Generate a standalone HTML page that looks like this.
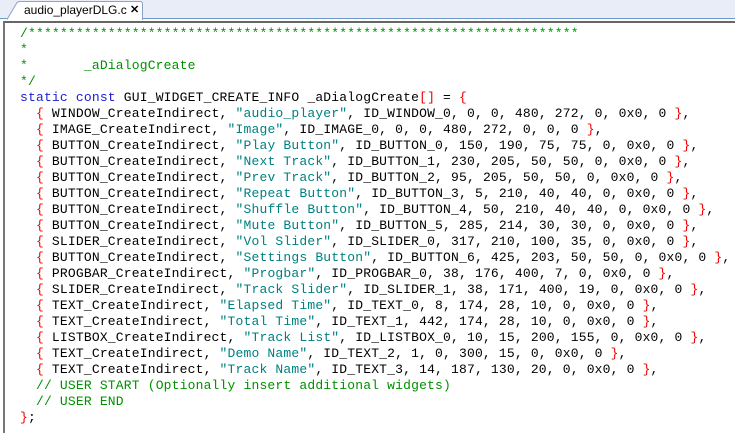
<!DOCTYPE html>
<html><head><style>
html,body{margin:0;padding:0;width:735px;height:431px;overflow:hidden;background:#fff}
.top{position:absolute;left:0;top:0;width:735px;height:18px;background:#e9edf7;border-bottom:1px solid #6d9ac8}
.tab{position:absolute;left:7px;top:1px;width:135px;height:18px;}
.tab svg{position:absolute;left:0;top:0}
.tabt{position:absolute;left:17px;top:2px;font:12px "Liberation Sans",sans-serif;color:#000}
.x{position:absolute;left:123px;top:2px;font:bold 11px "Liberation Sans",sans-serif}
.ed{position:absolute;left:3px;top:21px;width:732px;height:410px;border-top:2px solid #666;border-left:2px solid #777;background:#fff}
pre{position:absolute;left:15px;top:3px;margin:0;font:13px/16px "Liberation Mono","Courier New",monospace;letter-spacing:0.18px;color:#000}
.c{color:#009000}.k{color:#2020d0}.s{color:#008080}.r{color:#f00000}
</style></head><body>
<div class="top"></div>
<div class="tab"><svg width="136" height="19"><path d="M0 18.5 L10 1.5 Q11 0.5 13 0.5 L133 0.5 Q135.5 0.5 135.5 3 L135.5 19" fill="#fff" stroke="#8aa4c8"/></svg>
<span class="tabt">audio_playerDLG.c</span><span class="x">✕</span></div>
<div class="ed"><pre><span class="c">/*********************************************************************
*
*       _aDialogCreate
*/</span>
<span class="k">static</span> <span class="k">const</span> GUI_WIDGET_CREATE_INFO _aDialogCreate<span class="r">[]</span> = <span class="r">{</span>
  <span class="r">{</span> WINDOW_CreateIndirect, <span class="s">"audio_player"</span>, ID_WINDOW_0, 0, 0, 480, 272, 0, 0x0, 0 <span class="r">}</span>,
  <span class="r">{</span> IMAGE_CreateIndirect, <span class="s">"Image"</span>, ID_IMAGE_0, 0, 0, 480, 272, 0, 0, 0 <span class="r">}</span>,
  <span class="r">{</span> BUTTON_CreateIndirect, <span class="s">"Play Button"</span>, ID_BUTTON_0, 150, 190, 75, 75, 0, 0x0, 0 <span class="r">}</span>,
  <span class="r">{</span> BUTTON_CreateIndirect, <span class="s">"Next Track"</span>, ID_BUTTON_1, 230, 205, 50, 50, 0, 0x0, 0 <span class="r">}</span>,
  <span class="r">{</span> BUTTON_CreateIndirect, <span class="s">"Prev Track"</span>, ID_BUTTON_2, 95, 205, 50, 50, 0, 0x0, 0 <span class="r">}</span>,
  <span class="r">{</span> BUTTON_CreateIndirect, <span class="s">"Repeat Button"</span>, ID_BUTTON_3, 5, 210, 40, 40, 0, 0x0, 0 <span class="r">}</span>,
  <span class="r">{</span> BUTTON_CreateIndirect, <span class="s">"Shuffle Button"</span>, ID_BUTTON_4, 50, 210, 40, 40, 0, 0x0, 0 <span class="r">}</span>,
  <span class="r">{</span> BUTTON_CreateIndirect, <span class="s">"Mute Button"</span>, ID_BUTTON_5, 285, 214, 30, 30, 0, 0x0, 0 <span class="r">}</span>,
  <span class="r">{</span> SLIDER_CreateIndirect, <span class="s">"Vol Slider"</span>, ID_SLIDER_0, 317, 210, 100, 35, 0, 0x0, 0 <span class="r">}</span>,
  <span class="r">{</span> BUTTON_CreateIndirect, <span class="s">"Settings Button"</span>, ID_BUTTON_6, 425, 203, 50, 50, 0, 0x0, 0 <span class="r">}</span>,
  <span class="r">{</span> PROGBAR_CreateIndirect, <span class="s">"Progbar"</span>, ID_PROGBAR_0, 38, 176, 400, 7, 0, 0x0, 0 <span class="r">}</span>,
  <span class="r">{</span> SLIDER_CreateIndirect, <span class="s">"Track Slider"</span>, ID_SLIDER_1, 38, 171, 400, 19, 0, 0x0, 0 <span class="r">}</span>,
  <span class="r">{</span> TEXT_CreateIndirect, <span class="s">"Elapsed Time"</span>, ID_TEXT_0, 8, 174, 28, 10, 0, 0x0, 0 <span class="r">}</span>,
  <span class="r">{</span> TEXT_CreateIndirect, <span class="s">"Total Time"</span>, ID_TEXT_1, 442, 174, 28, 10, 0, 0x0, 0 <span class="r">}</span>,
  <span class="r">{</span> LISTBOX_CreateIndirect, <span class="s">"Track List"</span>, ID_LISTBOX_0, 10, 15, 200, 155, 0, 0x0, 0 <span class="r">}</span>,
  <span class="r">{</span> TEXT_CreateIndirect, <span class="s">"Demo Name"</span>, ID_TEXT_2, 1, 0, 300, 15, 0, 0x0, 0 <span class="r">}</span>,
  <span class="r">{</span> TEXT_CreateIndirect, <span class="s">"Track Name"</span>, ID_TEXT_3, 14, 187, 130, 20, 0, 0x0, 0 <span class="r">}</span>,
  <span class="c">// USER START (Optionally insert additional widgets)</span>
  <span class="c">// USER END</span>
<span class="r">}</span>;</pre></div>
</body></html>
